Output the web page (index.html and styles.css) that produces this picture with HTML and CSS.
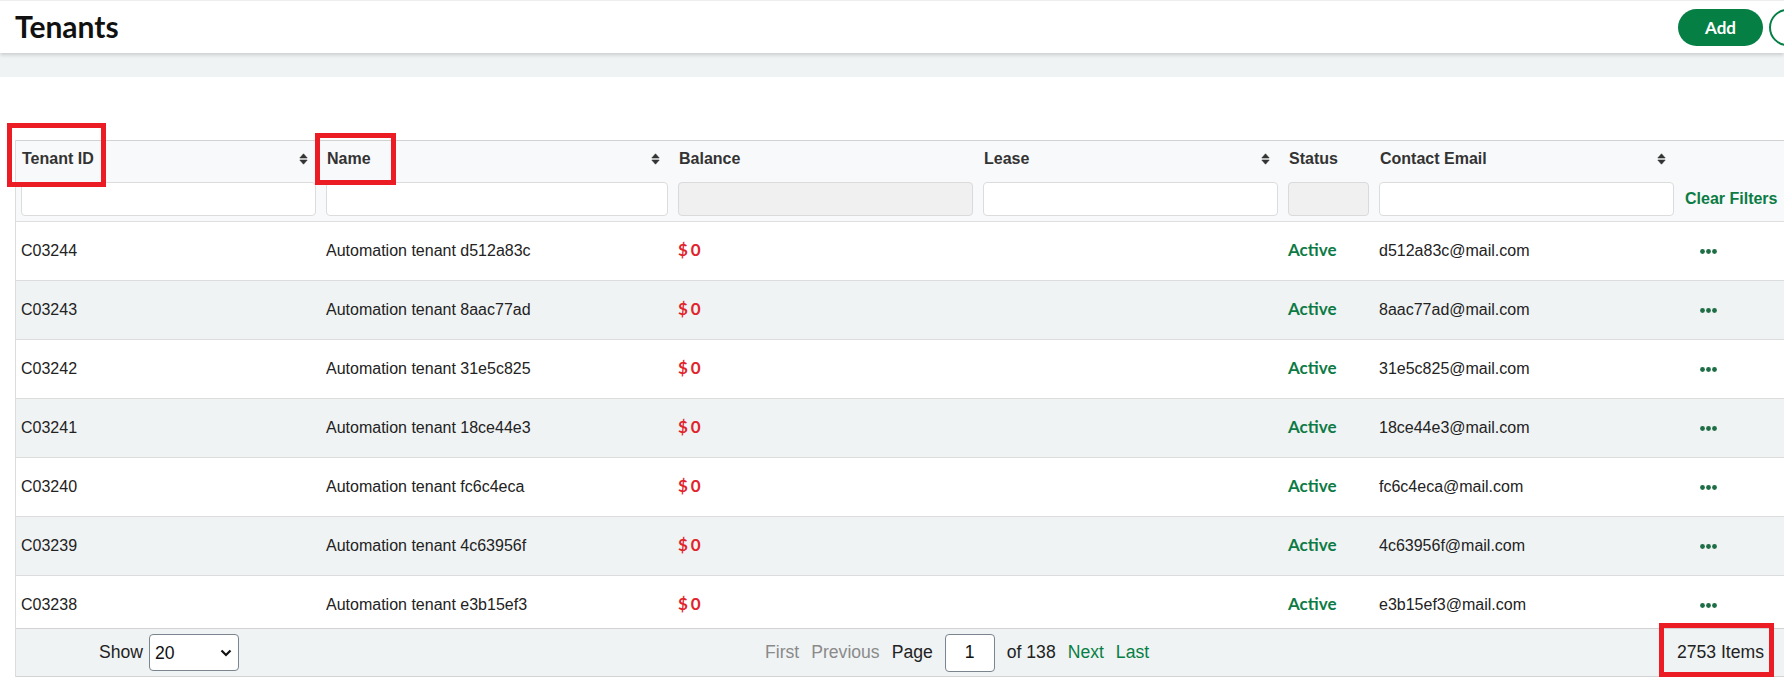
FILE: index.html
```html
<!DOCTYPE html>
<html lang="en">

<head>
    <meta charset="UTF-8">
    <meta name="viewport" content="width=device-width, initial-scale=1.0">
    <title>Tenants</title>
    <link rel="stylesheet" href="styles.css">
</head>

<body>
    <header class="topbar">
        <h1 class="title">Tenants</h1>
        <div class="actions">
            <button class="btn-add">Add</button>
            <button class="btn-circle"></button>
        </div>
    </header>
    <div class="strip"></div>

    <main class="content">
        <div class="grid">
            <div class="grid-head">
                <div class="th">
                    <div class="th-label"><span>Tenant ID</span><svg class="sort" viewBox="0 0 9 12"><path d="M4.5 0.8 L8.2 5 H0.8 Z M0.8 7 H8.2 L4.5 11.2 Z"/></svg></div>
                    <input class="filter" type="text">
                </div>
                <div class="th">
                    <div class="th-label"><span>Name</span><svg class="sort" viewBox="0 0 9 12"><path d="M4.5 0.8 L8.2 5 H0.8 Z M0.8 7 H8.2 L4.5 11.2 Z"/></svg></div>
                    <input class="filter" type="text">
                </div>
                <div class="th">
                    <div class="th-label"><span>Balance</span></div>
                    <input class="filter" type="text" disabled>
                </div>
                <div class="th">
                    <div class="th-label"><span>Lease</span><svg class="sort" viewBox="0 0 9 12"><path d="M4.5 0.8 L8.2 5 H0.8 Z M0.8 7 H8.2 L4.5 11.2 Z"/></svg></div>
                    <input class="filter" type="text">
                </div>
                <div class="th">
                    <div class="th-label"><span>Status</span></div>
                    <input class="filter" type="text" disabled>
                </div>
                <div class="th">
                    <div class="th-label"><span>Contact Email</span><svg class="sort" viewBox="0 0 9 12"><path d="M4.5 0.8 L8.2 5 H0.8 Z M0.8 7 H8.2 L4.5 11.2 Z"/></svg></div>
                    <input class="filter" type="text">
                </div>
                <div class="th th-clear">
                    <div class="th-label"></div>
                    <a href="#" class="clear">Clear Filters</a>
                </div>
            </div>

            <div class="grid-body">
                <div class="row">
                    <div class="td">C03244</div>
                    <div class="td">Automation tenant d512a83c</div>
                    <div class="td balance">$0</div>
                    <div class="td"></div>
                    <div class="td status">Active</div>
                    <div class="td">d512a83c@mail.com</div>
                    <div class="td more"><svg viewBox="0 0 17 5"><circle cx="2.5" cy="2.5" r="2.4"/><circle cx="8.5" cy="2.5" r="2.4"/><circle cx="14.5" cy="2.5" r="2.4"/></svg></div>
                </div>
                <div class="row">
                    <div class="td">C03243</div>
                    <div class="td">Automation tenant 8aac77ad</div>
                    <div class="td balance">$0</div>
                    <div class="td"></div>
                    <div class="td status">Active</div>
                    <div class="td">8aac77ad@mail.com</div>
                    <div class="td more"><svg viewBox="0 0 17 5"><circle cx="2.5" cy="2.5" r="2.4"/><circle cx="8.5" cy="2.5" r="2.4"/><circle cx="14.5" cy="2.5" r="2.4"/></svg></div>
                </div>
                <div class="row">
                    <div class="td">C03242</div>
                    <div class="td">Automation tenant 31e5c825</div>
                    <div class="td balance">$0</div>
                    <div class="td"></div>
                    <div class="td status">Active</div>
                    <div class="td">31e5c825@mail.com</div>
                    <div class="td more"><svg viewBox="0 0 17 5"><circle cx="2.5" cy="2.5" r="2.4"/><circle cx="8.5" cy="2.5" r="2.4"/><circle cx="14.5" cy="2.5" r="2.4"/></svg></div>
                </div>
                <div class="row">
                    <div class="td">C03241</div>
                    <div class="td">Automation tenant 18ce44e3</div>
                    <div class="td balance">$0</div>
                    <div class="td"></div>
                    <div class="td status">Active</div>
                    <div class="td">18ce44e3@mail.com</div>
                    <div class="td more"><svg viewBox="0 0 17 5"><circle cx="2.5" cy="2.5" r="2.4"/><circle cx="8.5" cy="2.5" r="2.4"/><circle cx="14.5" cy="2.5" r="2.4"/></svg></div>
                </div>
                <div class="row">
                    <div class="td">C03240</div>
                    <div class="td">Automation tenant fc6c4eca</div>
                    <div class="td balance">$0</div>
                    <div class="td"></div>
                    <div class="td status">Active</div>
                    <div class="td">fc6c4eca@mail.com</div>
                    <div class="td more"><svg viewBox="0 0 17 5"><circle cx="2.5" cy="2.5" r="2.4"/><circle cx="8.5" cy="2.5" r="2.4"/><circle cx="14.5" cy="2.5" r="2.4"/></svg></div>
                </div>
                <div class="row">
                    <div class="td">C03239</div>
                    <div class="td">Automation tenant 4c63956f</div>
                    <div class="td balance">$0</div>
                    <div class="td"></div>
                    <div class="td status">Active</div>
                    <div class="td">4c63956f@mail.com</div>
                    <div class="td more"><svg viewBox="0 0 17 5"><circle cx="2.5" cy="2.5" r="2.4"/><circle cx="8.5" cy="2.5" r="2.4"/><circle cx="14.5" cy="2.5" r="2.4"/></svg></div>
                </div>
                <div class="row">
                    <div class="td">C03238</div>
                    <div class="td">Automation tenant e3b15ef3</div>
                    <div class="td balance">$0</div>
                    <div class="td"></div>
                    <div class="td status">Active</div>
                    <div class="td">e3b15ef3@mail.com</div>
                    <div class="td more"><svg viewBox="0 0 17 5"><circle cx="2.5" cy="2.5" r="2.4"/><circle cx="8.5" cy="2.5" r="2.4"/><circle cx="14.5" cy="2.5" r="2.4"/></svg></div>
                </div>
            </div>

            <div class="grid-foot">
                <div class="show">
                    <span>Show</span>
                    <span class="select-wrap">
                        <select class="size">
                            <option>20</option>
                            <option>50</option>
                            <option>100</option>
                        </select>
                        <svg class="chevron" viewBox="0 0 12 8"><polyline points="1.5,1.5 6,6 10.5,1.5"/></svg>
                    </span>
                </div>
                <div class="pager">
                    <span class="off">First</span>
                    <span class="off">Previous</span>
                    <span>Page</span>
                    <input class="page-no" type="text" value="1">
                    <span>of 138</span>
                    <a href="#">Next</a>
                    <a href="#">Last</a>
                </div>
                <div class="count">2753 Items</div>
            </div>
        </div>
    </main>

    <!-- 강조 표시 -->
    <span class="mark mark-id"></span>
    <span class="mark mark-name"></span>
    <span class="mark mark-items"></span>
</body>

</html>
```

FILE: styles.css
```css
* {
    margin: 0;
    padding: 0;
    box-sizing: border-box;
}

html,
body {
    overflow: hidden;
}

body {
    position: relative;
    width: 1784px;
    height: 692px;
    background: #fff;
    font-family: "Liberation Sans", Arial, sans-serif;
    font-size: 16px;
    color: #222;
}

/* top bar */
.topbar {
    position: relative;
    z-index: 1;
    height: 53px;
    display: flex;
    align-items: center;
    justify-content: space-between;
    padding-left: 15px;
    border-top: 1px solid #eee;
    background: #fff;
    box-shadow: 0 2px 4px rgba(0, 0, 0, .16);
}

.title {
    margin-top: -2px;
    font-family: Lato, "Liberation Sans", sans-serif;
    font-size: 30px;
    font-weight: 700;
    color: #111;
}

.actions {
    display: flex;
    gap: 6px;
    margin-right: -22px;
}

.btn-add {
    width: 85px;
    height: 37px;
    border: none;
    border-radius: 19px;
    background: #067f45;
    color: #fff;
    font-family: Lato, "Liberation Sans", sans-serif;
    font-size: 17px;
    font-weight: 700;
}

.btn-circle {
    width: 37px;
    height: 37px;
    border: 2px solid #067f45;
    border-radius: 50%;
    background: #fff;
}

.strip {
    height: 24px;
    background: #f0f3f4;
}

/* table */
.content {
    padding: 63px 0 0 15px;
}

.grid {
    border-left: 1px solid #dcdcdc;
}

.grid-head,
.row {
    display: grid;
    grid-template-columns: 305px 352px 305px 305px 91px 305px 1fr;
}

.grid-head {
    background: #f8f9fa;
    border-top: 1px solid #d2d2d2;
    border-bottom: 1px solid #dedede;
}

.th {
    display: flex;
    flex-direction: column;
    gap: 13px;
    padding: 8px 5px 5px;
}

.th-label {
    height: 20px;
    display: flex;
    align-items: center;
    justify-content: space-between;
    padding: 0 8px 0 1px;
    font-weight: 700;
    color: #333;
    white-space: nowrap;
}

.sort {
    width: 9px;
    height: 12px;
    fill: #333;
    stroke: #333;
    stroke-width: .6;
    stroke-linejoin: round;
}

.filter {
    height: 34px;
    width: 100%;
    border: 1px solid #dcdcdc;
    border-radius: 4px;
    background: #fff;
    font: inherit;
    padding: 0 8px;
}

.filter:disabled {
    background: #f0f0f0;
    border-color: #dadada;
}

.th-clear {
    padding-left: 6px;
}

.clear {
    height: 34px;
    display: flex;
    align-items: center;
    color: #0b7c45;
    font-weight: 700;
    text-decoration: none;
    white-space: nowrap;
}

.grid-body {
    height: 406px;
    overflow: hidden;
}

.row {
    height: 59px;
    align-items: center;
    border-bottom: 1px solid #dcdcdc;
    background: #fff;
}

.row:nth-child(even) {
    background: #f0f3f4;
}

.td {
    padding: 0 5px;
    white-space: nowrap;
    color: #222;
}

.balance {
    margin-top: -3px;
    font-family: Lato, "Liberation Sans", sans-serif;
    font-size: 17px;
    font-weight: 700;
    letter-spacing: 3px;
    color: #e1242c;
}

.status {
    margin-top: -3px;
    font-family: Lato, "Liberation Sans", sans-serif;
    font-size: 17px;
    font-weight: 700;
    color: #0d7a45;
}

.more {
    display: flex;
    padding-left: 21px;
}

.more svg {
    width: 17px;
    height: 5px;
    fill: #1d6d45;
}

/* footer */
.grid-foot {
    height: 49px;
    display: grid;
    grid-template-columns: 749px auto 1fr;
    align-items: center;
    background: #f0f3f4;
    border-top: 1px solid #d2d2d2;
    border-bottom: 1px solid #d2d2d2;
    font-size: 17.6px;
}

.show {
    display: flex;
    align-items: center;
    gap: 6px;
    padding-left: 83px;
}

.select-wrap {
    position: relative;
    display: inline-block;
}

.size {
    appearance: none;
    width: 90px;
    height: 37px;
    padding-left: 5px;
    border: 1px solid #7b8590;
    border-radius: 4px;
    background: #fff;
    font: inherit;
    color: #111;
}

.chevron {
    position: absolute;
    right: 7px;
    top: 15px;
    width: 12px;
    height: 8px;
    fill: none;
    stroke: #111;
    stroke-width: 2.2;
    pointer-events: none;
}

.pager {
    display: flex;
    align-items: center;
    gap: 12px;
    color: #222;
}

.pager .off {
    color: #8a8a8a;
}

.pager a {
    color: #067f45;
    text-decoration: none;
}

.page-no {
    width: 50px;
    height: 38px;
    border: 1px solid #7b8590;
    border-radius: 4px;
    text-align: center;
    font: inherit;
    color: #111;
}

.count {
    justify-self: end;
    padding-right: 20px;
    color: #222;
}

/* red annotation boxes */
.mark {
    position: absolute;
    border: 5px solid #ec1c24;
    pointer-events: none;
}

.mark-id {
    left: 7px;
    top: 123px;
    width: 99px;
    height: 64px;
}

.mark-name {
    left: 315px;
    top: 133px;
    width: 81px;
    height: 52px;
}

.mark-items {
    left: 1659px;
    top: 623px;
    width: 115px;
    height: 54px;
}
```
